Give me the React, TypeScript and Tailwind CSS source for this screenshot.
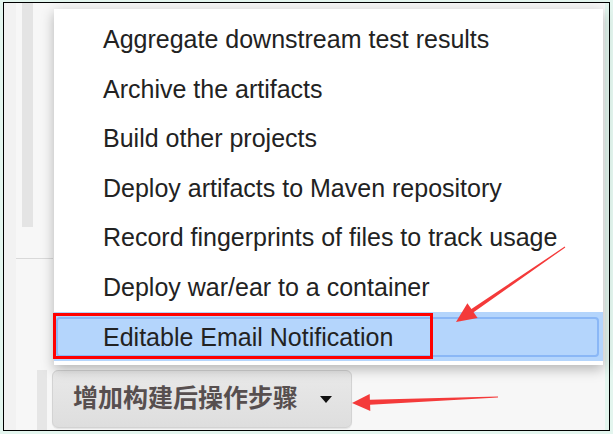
import React from 'react';

const items = [
  'Aggregate downstream test results',
  'Archive the artifacts',
  'Build other projects',
  'Deploy artifacts to Maven repository',
  'Record fingerprints of files to track usage',
  'Deploy war/ear to a container',
];

const App = () => {
  return (
    <div className="relative w-[613px] h-[434px] bg-[#e3f5ee] overflow-hidden pl-[3px] pt-[2px]">
      <div className="relative w-[607px] h-[429px] border border-black bg-[#f7f7f7] flex">
        {/* left gutter */}
        <div className="w-[12px] h-full bg-[#f2f2f2]" />

        <div className="flex-1 flex flex-col">
          <div className="h-[224px] pl-[6px]">
            <div className="w-[11px] h-full bg-[#e4e4e4]" />
          </div>
          <div className="h-[31px]" />
          <div className="w-[37px] h-px bg-[#d9d9d9]" />

          {/* button row */}
          <div className="mt-auto flex items-end">
            <div className="ml-[21px] w-[10px] h-[60px] bg-[#e6e6e6]" />
            <button className="ml-[5px] mb-[2px] w-[300px] h-[58px] rounded-[6px] border border-[#d3d3d3] bg-gradient-to-b from-[#e9e9e9] to-[#dedede] flex items-center pl-[20px] font-['Liberation_Sans','Noto_Sans_CJK_SC',sans-serif] text-[25px] font-bold text-[#574f4f] shadow-[0_1px_1px_rgba(0,0,0,0.08)]">
              <span>增加构建后操作步骤</span>
              <svg width="12" height="8" viewBox="0 0 12 8" className="ml-[22px] mt-[2px]">
                <polygon points="0,0 12,0 6,7" fill="#111" />
              </svg>
            </button>
          </div>
        </div>

        <div className="w-[4px] h-full bg-[#e3f5ee]" />

        {/* dropdown menu */}
        <div className="absolute left-[50px] top-[6px] w-[549px] h-[356px] bg-white shadow-[0_4px_12px_rgba(0,0,0,0.28)] pt-[6px] font-['Liberation_Sans',Arial,sans-serif] text-[25px] text-[#222]">
          {items.map((t) => (
            <div key={t} className="h-[49.5px] flex items-center pl-[49px] leading-none">
              {t}
            </div>
          ))}
          <div className="h-[49px] bg-[#b4d5fc] pt-[5px] pb-[4px] pl-[2px] pr-[4px]">
            <div className="h-full rounded-[4px] border-2 border-[#8ab7f6] flex items-center pl-[45px] leading-none">
              Editable Email Notification
            </div>
          </div>
        </div>
      </div>

      {/* annotations */}
      <svg className="absolute left-0 top-0 pointer-events-none" width="613" height="434">
        <rect x="54.5" y="314.5" width="377" height="43" fill="none" stroke="#ff0000" strokeWidth="3" />
        <polygon
          points="565.3,247.4 473.6,312.3 477.6,318 456,322 467.4,303.2 471.4,308.95 564.7,246.6"
          fill="#f43a3a"
        />
        <polygon
          points="498,397.5 370.1,404.8 370.3,411 352,403 369.7,394 369.9,399.8 498,396.5"
          fill="#f43a3a"
        />
      </svg>
    </div>
  );
};

export default App;
